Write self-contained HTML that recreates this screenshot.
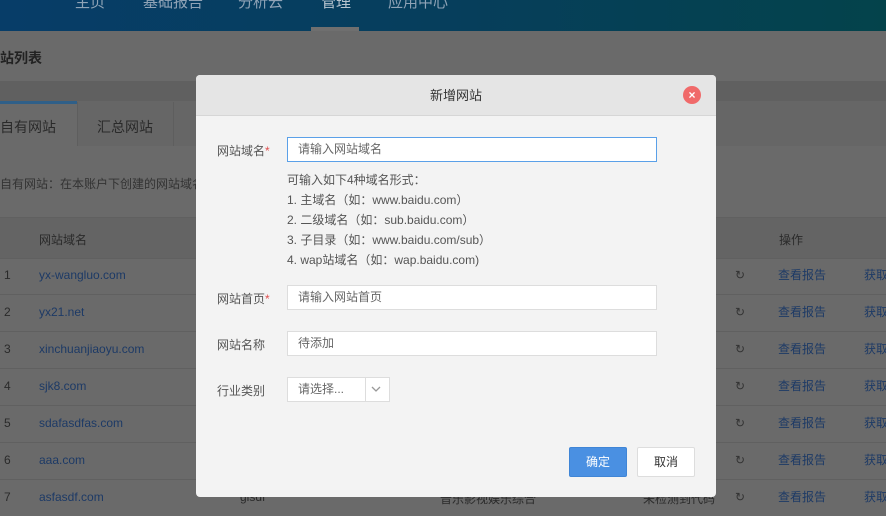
<!DOCTYPE html>
<html><head><meta charset="utf-8"><style>
*{margin:0;padding:0;box-sizing:border-box}
html,body{background:#6a6a6a}
body{width:886px;height:507px;overflow:hidden;position:relative;font-family:"Liberation Sans","Noto Sans CJK SC",sans-serif;font-size:12px;color:#2a2a2a;white-space:nowrap}
.hdr{position:absolute;left:0;top:0;width:886px;height:31px;background:linear-gradient(90deg,#073d68,#063e5c 50%,#04434b)}
.nav{position:absolute;top:-9px;color:#8fa3b6;font-size:15px}
.act{position:absolute;left:311px;top:27px;width:48px;height:4px;background:#6f6f6f}
.abs{position:absolute}
.link{color:#1d3a66}
.row{position:absolute;left:0;width:886px;height:1px;background:#606060}
.cell{position:absolute;line-height:14px}
.modal{position:absolute;left:196px;top:75px;width:520px;height:422px;background:#f3f3f3;border-radius:4px;overflow:hidden}
.mh{height:41px;background:#e5e5e5;border-bottom:1px solid #d6d6d6;text-align:center;line-height:41px;font-size:13px;color:#333}
.close{position:absolute;left:487px;top:11px;width:18px;height:18px;border-radius:50%;background:#f06a6a;color:#fff;font-size:12px;line-height:18px;text-align:center;font-weight:bold}
.lbl{position:absolute;left:21px;font-size:12px;color:#555}
.lbl i{color:#e05050;font-style:normal}
.inp{position:absolute;left:91px;width:370px;height:25px;background:#fff;border:1px solid #ddd;padding-left:10px;line-height:23px;font-size:12px;color:#666}
.hint{position:absolute;left:91px;top:95px;font-size:12px;color:#555;line-height:20px}
.btn{position:absolute;top:372px;width:58px;height:30px;line-height:28px;text-align:center;font-size:12px;border-radius:2px}
</style></head><body>
<div class="hdr">
<span class="nav" style="left:75px">主页</span>
<span class="nav" style="left:143px">基础报告</span>
<span class="nav" style="left:238px">分析云</span>
<span class="nav" style="left:321px;color:#b7c4cf">管理</span>
<span class="nav" style="left:388px">应用中心</span>
<div class="act"></div>
</div>
<div class="abs" style="left:-14px;top:48px;font-size:14px;font-weight:bold;color:#222">网站列表</div>
<div class="abs" style="left:0;top:81px;width:886px;height:20px;background:#606060"></div>
<div class="abs" style="left:0;top:101px;width:886px;height:45px;background:#666"></div>
<div class="abs" style="left:0;top:101px;width:77px;height:45px;background:#6a6a6a;border-top:3px solid #2f5f88"></div>
<div class="abs" style="left:77px;top:102px;width:97px;height:44px;background:#666;border-left:1px solid #5e5e5e;border-right:1px solid #5e5e5e"></div>
<div class="abs" style="left:0;top:117px;font-size:14px">自有网站</div>
<div class="abs" style="left:97px;top:117px;font-size:14px">汇总网站</div>
<div class="abs" style="left:0;top:175px;color:#333">自有网站：在本账户下创建的网站域名</div>
<div class="abs" style="left:0;top:218px;width:886px;height:40px;background:#646464"></div>
<div class="abs" style="left:39px;top:231px">网站域名</div>
<div class="abs" style="left:779px;top:231px">操作</div>
<div class="row" style="top:217px"></div><div class="row" style="top:258px"></div>
<div class="row" style="top:294px"></div><div class="row" style="top:331px"></div>
<div class="row" style="top:368px"></div><div class="row" style="top:405px"></div>
<div class="row" style="top:442px"></div><div class="row" style="top:479px"></div>

<div class="cell" style="left:4px;top:268px">1</div><div class="cell link" style="left:39px;top:268px">yx-wangluo.com</div>
<div class="cell" style="left:4px;top:305px">2</div><div class="cell link" style="left:39px;top:305px">yx21.net</div>
<div class="cell" style="left:4px;top:342px">3</div><div class="cell link" style="left:39px;top:342px">xinchuanjiaoyu.com</div>
<div class="cell" style="left:4px;top:379px">4</div><div class="cell link" style="left:39px;top:379px">sjk8.com</div>
<div class="cell" style="left:4px;top:416px">5</div><div class="cell link" style="left:39px;top:416px">sdafasdfas.com</div>
<div class="cell" style="left:4px;top:453px">6</div><div class="cell link" style="left:39px;top:453px">aaa.com</div>
<div class="cell" style="left:4px;top:490px">7</div><div class="cell link" style="left:39px;top:490px">asfasdf.com</div>

<div class="abs" style="left:735px;top:257px;line-height:37px;color:#333">↻<br>↻<br>↻<br>↻<br>↻<br>↻<br>↻</div>
<div class="abs link" style="left:778px;top:257px;line-height:37px">查看报告<br>查看报告<br>查看报告<br>查看报告<br>查看报告<br>查看报告<br>查看报告</div>
<div class="abs link" style="left:864px;top:257px;line-height:37px">获取<br>获取<br>获取<br>获取<br>获取<br>获取<br>获取</div>
<div class="abs" style="left:240px;top:490px">glsdf</div>
<div class="abs" style="left:440px;top:490px">音乐影视娱乐综合</div>
<div class="abs" style="left:643px;top:490px">未检测到代码</div>
<div class="modal">
<div class="mh">新增网站</div>
<div class="close">×</div>
<div class="lbl" style="top:67px">网站域名<i>*</i></div>
<div class="inp" style="top:62px;border-color:#5aa0e8;color:#666">请输入网站域名</div>
<div class="hint">可输入如下4种域名形式：<br>1. 主域名（如：www.baidu.com）<br>2. 二级域名（如：sub.baidu.com）<br>3. 子目录（如：www.baidu.com/sub）<br>4. wap站域名（如：wap.baidu.com)</div>
<div class="lbl" style="top:215px">网站首页<i>*</i></div>
<div class="inp" style="top:210px">请输入网站首页</div>
<div class="lbl" style="top:261px">网站名称</div>
<div class="inp" style="top:256px">待添加</div>
<div class="lbl" style="top:307px">行业类别</div>
<div class="inp" style="top:302px;width:103px">请选择...</div>
<div class="abs" style="left:169px;top:303px;width:1px;height:23px;background:#ddd"></div>
<svg class="abs" style="left:175px;top:310px" width="10" height="8" viewBox="0 0 10 8"><path d="M1 2 L5 6 L9 2" stroke="#999" stroke-width="1.3" fill="none"/></svg>
<div class="btn" style="left:373px;background:#4a90e2;color:#fff;border:1px solid #3f85d6">确定</div>
<div class="btn" style="left:441px;background:#fff;border:1px solid #ddd;color:#333">取消</div>
</div>
</body></html>
